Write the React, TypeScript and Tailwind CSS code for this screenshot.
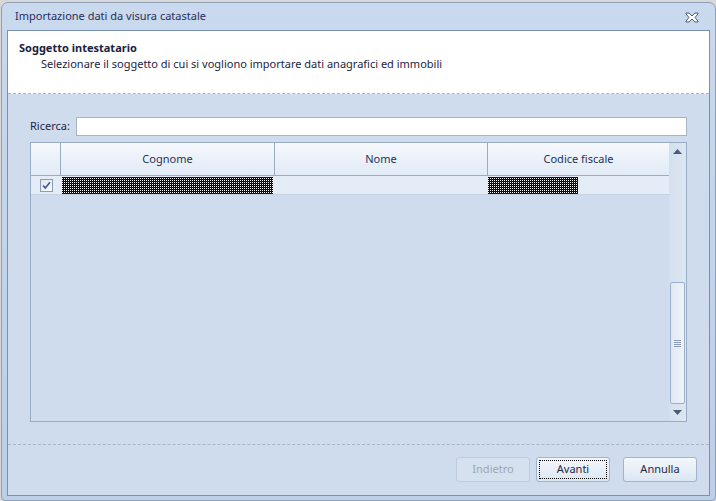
import React from 'react';

const font = { fontFamily: '"Segoe UI", "Noto Sans", "Open Sans", sans-serif' };

// dithered "hidden" cell content, drawn as a 1px checker pattern
function Dots({ width, id }: { width: number; id: string }) {
  return (
    <svg width={width} height="17" shapeRendering="crispEdges" className="block">
      <defs>
        <pattern id={id} width="2" height="2" patternUnits="userSpaceOnUse">
          <rect width="2" height="2" fill="#fff" />
          <rect x="0" y="0" width="1" height="1" fill="#000" />
          <rect x="1" y="1" width="1" height="1" fill="#000" />
          <rect x="1" y="0" width="1" height="1" fill="#222" />
        </pattern>
      </defs>
      <rect width={width} height="17" fill={`url(#${id})`} />
    </svg>
  );
}

function Btn({ label, disabled, focused, className = '' }: { label: string; disabled?: boolean; focused?: boolean; className?: string }) {
  if (disabled) {
    return (
      <div className={`w-[74px] h-[25px] rounded-[3px] border border-[#bfcbdc] bg-[#d6e1ef] flex items-center justify-center text-[11px] text-[#9aa6b6] ${className}`}>
        {label}
      </div>
    );
  }
  return (
    <div className={`w-[74px] h-[25px] rounded-[3px] border border-[#a3b3ca] bg-gradient-to-b from-[#f4f7fb] to-[#dce6f3] p-[2px] flex ${className}`}>
      <div
        className={`flex-1 flex items-center justify-center text-[11px] text-[#1b2a45] ${
          focused ? 'border border-dotted border-black' : 'border border-transparent'
        }`}
      >
        {label}
      </div>
    </div>
  );
}

export default function App() {
  return (
    <div className="w-[716px] h-[501px] bg-[#d8d8d8] pt-[2px] pl-[1px] overflow-hidden" style={font}>
      <div className="w-[715px] h-[499px] rounded-t-[7px] rounded-b-[4px] border border-[#8e9fb8] bg-gradient-to-b from-[#c9d9ee] to-[#bccfe7] flex flex-col px-[5px] pb-[4px]">
        {/* title bar */}
        <div className="h-[27px] flex items-center justify-between shrink-0">
          <div className="pl-[8px] text-[11px] text-[#2b2d5a]">Importazione dati da visura catastale</div>
          <svg width="14" height="11" viewBox="0 0 14 11" className="mr-[11px] mt-[2px]">
            <path
              d="M1 1h3l3 3 3-3h3v1l-3 3.5 3 3.5v1h-3l-3-3-3 3H1v-1l3-3.5L1 2z"
              fill="#fff"
              stroke="#4a5670"
              strokeWidth="1"
              strokeLinejoin="round"
            />
          </svg>
        </div>

        {/* content */}
        <div className="flex-1 border border-[#7a90b0] bg-[#cfdcee] flex flex-col">
          {/* header */}
          <div className="h-[63px] bg-white border-b border-dashed border-[#a9b6c6] shrink-0 pl-[11px] pt-[9px]">
            <div className="text-[11px] font-bold text-[#1a2040] leading-[16px]">Soggetto intestatario</div>
            <div className="text-[11px] text-[#1c2442] leading-[15px] pl-[22px]">
              Selezionare il soggetto di cui si vogliono importare dati anagrafici ed immobili
            </div>
          </div>

          {/* body */}
          <div className="flex-1 flex flex-col px-[22px] pt-[23px]">
            <div className="flex items-center gap-[6px] h-[19px]">
              <span className="text-[11px] text-[#1c2442]">Ricerca:</span>
              <div className="flex-1 h-[19px] bg-white border border-[#a5b4c9]" />
            </div>

            <div className="mt-[6px] h-[280px] border border-[#9aabc4] flex">
              <div className="flex-1 flex flex-col">
                <div className="h-[33px] flex bg-gradient-to-b from-[#f6f9fd] to-[#e1eaf6] border-b border-[#9aabc4] text-[11px] text-[#1e3358]">
                  <div className="w-[30px] border-r border-[#9aabc4]" />
                  <div className="w-[214px] border-r border-[#9aabc4] flex items-center justify-center">Cognome</div>
                  <div className="w-[213px] border-r border-[#9aabc4] flex items-center justify-center">Nome</div>
                  <div className="flex-1 flex items-center justify-center">Codice fiscale</div>
                </div>
                <div className="h-[19px] flex bg-[#e4ecf7] border-b border-[#c4d2e4]">
                  <div className="w-[30px] flex items-center justify-center">
                    <div className="w-[13px] h-[13px] border border-[#8d9cb3] bg-gradient-to-br from-[#dfe6f0] to-[#f8fafd] flex items-center justify-center">
                      <svg width="9" height="9" viewBox="0 0 9 9">
                        <path d="M1 4.5l2.3 2.6L8 1.2" fill="none" stroke="#3b5b8c" strokeWidth="1.6" />
                      </svg>
                    </div>
                  </div>
                  <div className="w-[214px] pt-px pl-px">
                    <Dots width={211} id="d1" />
                  </div>
                  <div className="w-[213px]" />
                  <div className="flex-1 pt-px">
                    <Dots width={90} id="d2" />
                  </div>
                </div>
              </div>

              {/* scrollbar */}
              <div className="w-[17px] bg-gradient-to-r from-[#d4e0ee] to-[#dde7f3] flex flex-col items-center">
                <div className="h-[17px] flex items-center justify-center">
                  <svg width="9" height="5" viewBox="0 0 9 5">
                    <path d="M0 5L4.5 0 9 5z" fill="#4c5a78" />
                  </svg>
                </div>
                <div className="flex-1" />
                <div className="w-[15px] h-[122px] rounded-[2px] border border-[#9cafc9] bg-gradient-to-r from-[#dfe8f4] to-[#eef3fa] flex flex-col items-center justify-center gap-[1px]">
                  <div className="w-[7px] h-px bg-[#8c9cb6]" />
                  <div className="w-[7px] h-px bg-[#8c9cb6]" />
                  <div className="w-[7px] h-px bg-[#8c9cb6]" />
                  <div className="w-[7px] h-px bg-[#8c9cb6]" />
                </div>
                <div className="h-[17px] flex items-center justify-center">
                  <svg width="9" height="5" viewBox="0 0 9 5">
                    <path d="M0 0h9L4.5 5z" fill="#4c5a78" />
                  </svg>
                </div>
              </div>
            </div>

            <div className="mt-[22px] border-t border-dashed border-[#a9b6c6] -mx-[22px]" />

            <div className="flex justify-end mt-[12px] -mr-[10px]">
              <Btn label="Indietro" disabled />
              <Btn label="Avanti" focused className="ml-[6px]" />
              <Btn label="Annulla" className="ml-[13px]" />
            </div>
          </div>
        </div>
      </div>
    </div>
  );
}
